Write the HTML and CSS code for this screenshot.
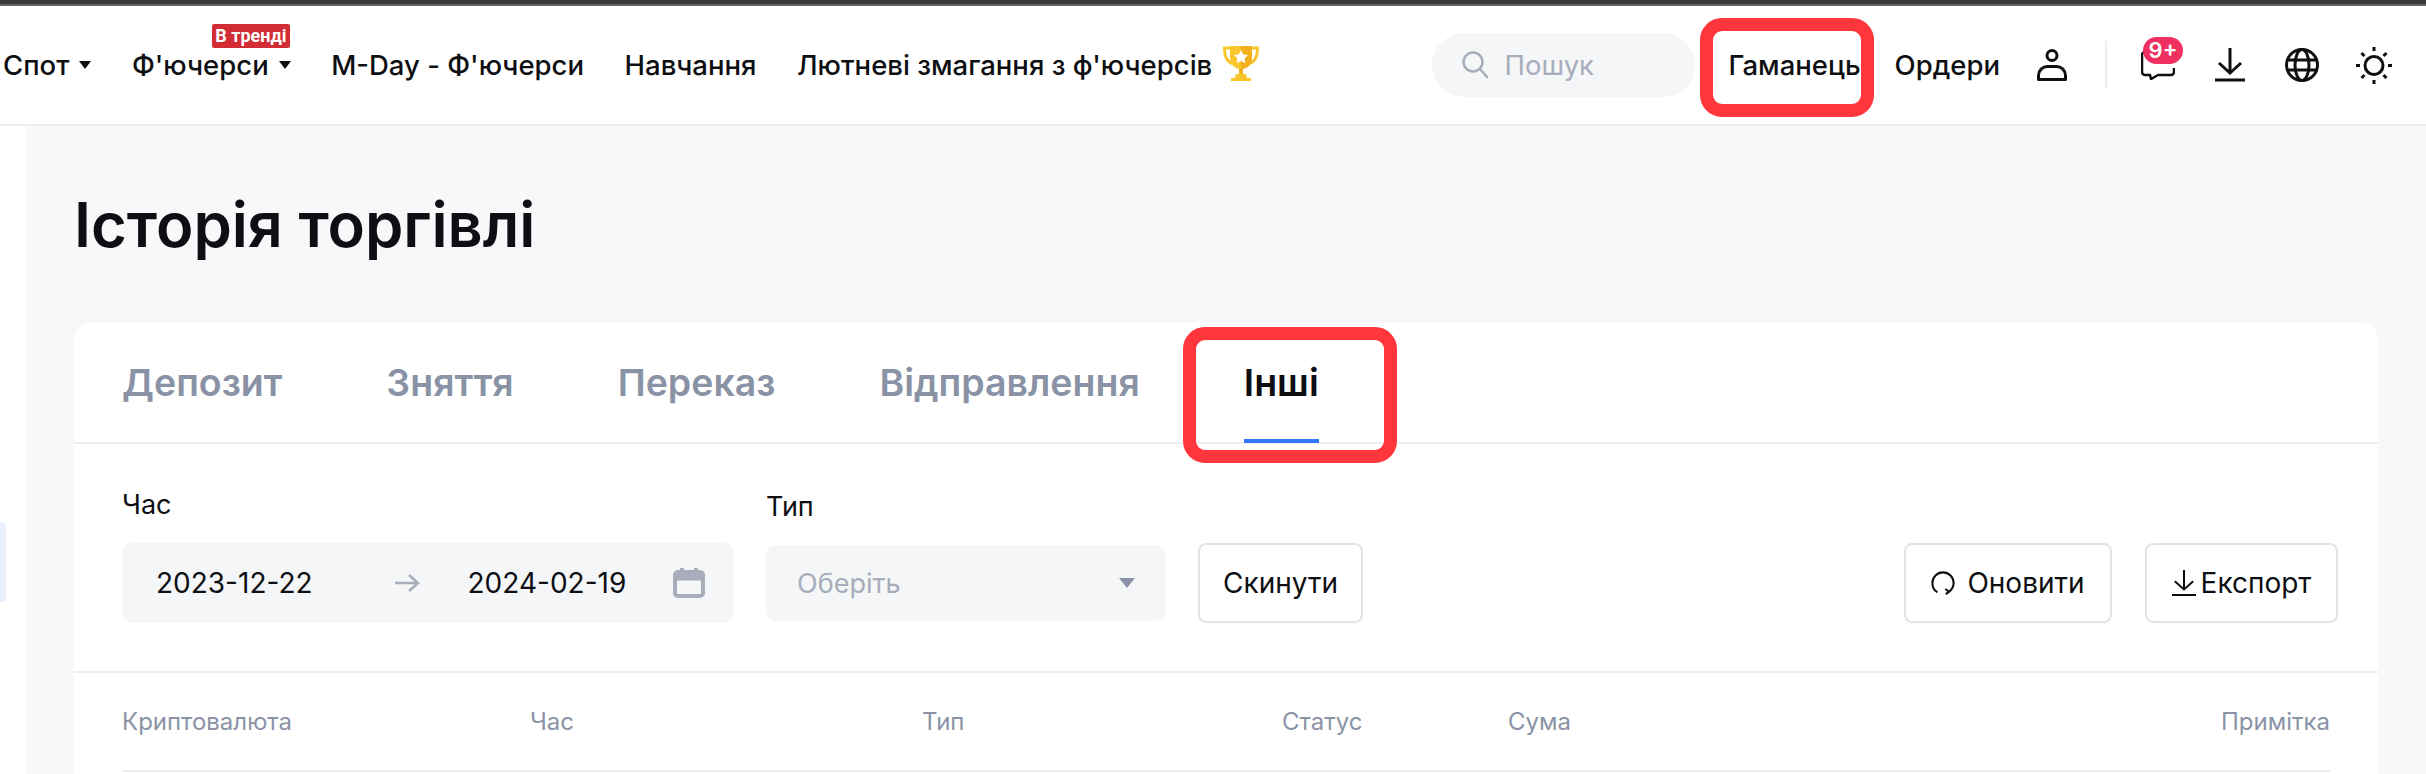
FILE: index.html
```html
<!DOCTYPE html>
<html lang="uk">
<head>
    <meta charset="UTF-8">
    <title>Історія торгівлі</title>
    <link rel="stylesheet" href="styles.css">
</head>
<body>
    <div class="topstrip"></div>

    <!-- Навігація -->
    <header class="navbar">
        <nav class="nav-left">
            <a class="nav-item">Спот <span class="caret"></span></a>
            <a class="nav-item nav-trending">
                <span class="trend-badge">В тренді</span>
                Ф'ючерси <span class="caret"></span>
            </a>
            <a class="nav-item">M-Day - Ф'ючерси</a>
            <a class="nav-item">Навчання</a>
            <a class="nav-item nav-contest">
                Лютневі змагання з ф'ючерсів
                <svg class="trophy" width="38" height="38" viewBox="0 0 38 38">
                    <path d="M9 3H2.500c0 10 3 15 10 16M29 3h6.500c0 10-3 15-10 16" fill="none" stroke="#f9c72e" stroke-width="3"/>
                    <path d="M8 1h22v11c0 8-5 12-11 12S8 20 8 12z" fill="#fbc62c"/>
                    <path d="M19 1h11v11c0 8-5 12-11 12z" fill="#f2b01e"/>
                    <path d="M17 23h4v7h-4z" fill="#f2b01e"/>
                    <path d="M14 29h10l1 4H13z" fill="#fbc62c"/>
                    <path d="M9 33h20v3H9z" fill="#fbc62c"/>
                    <path d="M19 5l2.300 4.500 4.700.6-3.500 3.300.9 4.800-4.400-2.300-4.400 2.300.9-4.800-3.500-3.300 4.700-.6z" fill="#fff"/>
                </svg>
            </a>
        </nav>
        <div class="nav-right">
            <div class="search">
                <svg width="28" height="30" viewBox="0 0 28 30" fill="none" stroke="#a7adba" stroke-width="2.500">
                    <circle cx="12" cy="12" r="9.500"/>
                    <path d="M19 19l7 8" stroke-linecap="round"/>
                </svg>
                <span>Пошук</span>
            </div>
            <a class="nav-item nav-wallet">Гаманець<span class="highlight highlight-wallet"></span></a>
            <a class="nav-item">Ордери</a>
            <svg class="nav-user" width="30" height="32" viewBox="0 0 30 32" fill="none" stroke="#0d0f12" stroke-width="3">
                <circle cx="15" cy="6.500" r="5"/>
                <path d="M1.500 30.500v-4a9 9 0 0 1 9-9h9a9 9 0 0 1 9 9v4z" stroke-linejoin="round"/>
            </svg>
            <span class="nav-divider"></span>
            <div class="nav-icons">
                <div class="chat">
                    <svg width="34" height="30" viewBox="0 0 34 30" fill="none" stroke="#0d0f12" stroke-width="2.500">
                        <path d="M5 2H4a3 3 0 0 0-3 3v17a3 3 0 0 0 3 3h5l1 4 7-4h13a3 3 0 0 0 3-3v-4" stroke-linejoin="round"/>
                    </svg>
                    <span class="chat-badge">9+</span>
                </div>
                <svg width="30" height="34" viewBox="0 0 30 34" fill="none" stroke="#0d0f12" stroke-width="3">
                    <path d="M15 0v25M4 15l11 10 11-10"/>
                    <path d="M0 32h30"/>
                </svg>
                <svg width="34" height="34" viewBox="0 0 34 34" fill="none" stroke="#0d0f12" stroke-width="3">
                    <circle cx="17" cy="17" r="15.500"/>
                    <ellipse cx="17" cy="17" rx="7" ry="15.500"/>
                    <path d="M2 12h30M2 22h30"/>
                </svg>
                <svg class="sun" width="36" height="37" viewBox="0 0 36 37" fill="none" stroke="#0d0f12" stroke-width="3">
                    <circle cx="18" cy="18.500" r="9"/>
                    <path d="M18 0v4M18 33v4M0 18.500h4M32 18.500h4M5.500 6l3 3M27.500 28l3 3M30.500 6l-3 3M8.500 28l-3 3"/>
                </svg>
            </div>
        </div>
    </header>

    <div class="page">
        <aside class="sidebar"><div class="side-active"></div></aside>

        <main class="content">
            <h1 class="page-title">Історія торгівлі</h1>

            <section class="card">
                <div class="tabs">
                    <a class="tab">Депозит</a>
                    <a class="tab">Зняття</a>
                    <a class="tab">Переказ</a>
                    <a class="tab">Відправлення</a>
                    <a class="tab active">Інші<span class="highlight highlight-tab"></span></a>
                </div>

                <!-- Фільтри -->
                <div class="filters">
                    <div class="field">
                        <label>Час</label>
                        <div class="date-range">
                            <span class="date">2023-12-22</span>
                            <svg class="date-arrow" width="26" height="20" viewBox="0 0 26 20" fill="none" stroke="#a7adba" stroke-width="2.500">
                                <path d="M1 10h23M15 2l9 8-9 8"/>
                            </svg>
                            <span class="date">2024-02-19</span>
                            <svg class="date-cal" width="32" height="30" viewBox="0 0 32 30" fill="none" stroke="#a7adba" stroke-width="4">
                                <rect x="2" y="4" width="28" height="24" rx="3"/>
                                <path d="M2 9h28" stroke-width="7"/>
                                <path d="M9 0v5M23 0v5"/>
                            </svg>
                        </div>
                    </div>
                    <div class="field">
                        <label>Тип</label>
                        <div class="select">
                            <span>Оберіть</span>
                            <span class="select-caret"></span>
                        </div>
                    </div>
                    <button class="btn btn-reset">Скинути</button>
                    <div class="actions">
                        <button class="btn btn-refresh">
                            <svg width="24" height="26" viewBox="0 0 26 26" fill="none" stroke="#0d0f12" stroke-width="2.200">
                                <path d="M7 23C3 21 1.500 17 1.500 13a11.500 11.500 0 0 1 23 0c0 4-1.500 7-5 9.500"/>
                                <path d="M15.500 19.500l4 3-3.500 2.500" />
                            </svg>
                            Оновити
                        </button>
                        <button class="btn btn-export">
                            <svg width="24" height="28" viewBox="0 0 26 28" fill="none" stroke="#0d0f12" stroke-width="2.200">
                                <path d="M13 0v21M3 12l10 9 10-9"/>
                                <path d="M0 27h26"/>
                            </svg>
                            Експорт
                        </button>
                    </div>
                </div>

                <div class="table-head">
                    <span>Криптовалюта</span>
                    <span>Час</span>
                    <span>Тип</span>
                    <span>Статус</span>
                    <span>Сума</span>
                    <span>Примітка</span>
                </div>
            </section>
        </main>
    </div>
</body>
</html>
```

FILE: styles.css
```css
* {
    box-sizing: border-box;
}
html, body {
    margin: 0;
    height: 774px;
    overflow: hidden;
}
body {
    background-color: #fff;
    color: #0d0f12;
    font-family: Inter, "Noto Sans", sans-serif;
}
.topstrip {
    height: 6px;
    background-color: #3a3a3a;
    border-bottom: 2px solid #666;
}

/* Navigation */
.navbar {
    display: flex;
    justify-content: space-between;
    align-items: center;
    height: 120px;
    padding: 0 34px 0 3px;
    background-color: #fff;
    border-bottom: 2px solid #eceef2;
}
.nav-left, .nav-right, .nav-icons {
    display: flex;
    align-items: center;
}
.nav-left {
    gap: 40.500px;
}
.nav-right {
    gap: 34px;
}
.nav-icons {
    gap: 40px;
}
.nav-item {
    position: relative;
    display: flex;
    align-items: center;
    gap: 10px;
    font-size: 27.500px;
    font-weight: 500;
    white-space: nowrap;
}
.caret {
    width: 0;
    height: 0;
    border-left: 6.500px solid transparent;
    border-right: 6.500px solid transparent;
    border-top: 8px solid #0d0f12;
}
.trend-badge {
    position: absolute;
    top: -24px;
    left: 80px;
    width: 78px;
    height: 24px;
    background-color: #d22c35;
    border-radius: 2px;
    color: #fff;
    font-family: Roboto, sans-serif;
    font-size: 18px;
    font-weight: 700;
    line-height: 24px;
    text-align: center;
}
.trophy {
    margin-top: -2px;
}
.nav-user {
    margin: 0 4px 0 3px;
}
.sun {
    margin-left: -3px;
}
.search {
    display: flex;
    align-items: center;
    gap: 16px;
    width: 263px;
    height: 64px;
    padding-left: 29px;
    background-color: #f5f6f8;
    border-radius: 32px;
    color: #a7adba;
    font-size: 27.500px;
}
.highlight {
    position: absolute;
    border: 13px solid #ff363c;
    border-radius: 22px;
}
.highlight-wallet {
    top: -30px;
    left: -29px;
    width: 174px;
    height: 99px;
}
.highlight-tab {
    top: 4px;
    left: -61px;
    width: 214px;
    height: 136px;
}
.nav-divider {
    width: 2px;
    height: 48px;
    background-color: #ebecf0;
}
.chat {
    position: relative;
    display: flex;
}
.chat-badge {
    position: absolute;
    top: -13px;
    left: 2px;
    width: 40px;
    height: 27px;
    background-color: #f03060;
    border-radius: 14px;
    color: #fff;
    font-size: 22px;
    font-weight: 600;
    line-height: 27px;
    text-align: center;
}

/* Page */
.page {
    display: flex;
    height: 648px;
}
.sidebar {
    flex: none;
    width: 26px;
    padding-top: 396px;
    background-color: #fff;
}
.side-active {
    width: 6px;
    height: 80px;
    background-color: #e8f0fe;
    border-radius: 0 4px 4px 0;
}
.content {
    flex: 1;
    padding: 0 48px 0 48px;
    background-color: #f7f8fa;
}
.page-title {
    margin: 0;
    padding: 65px 0 0;
    height: 197px;
    font-size: 61.500px;
    font-weight: 600;
    line-height: 68px;
}
.card {
    background-color: #fff;
    border-radius: 16px 16px 0 0;
    height: 451px;
}

/* Tabs */
.tabs {
    display: flex;
    gap: 104px;
    height: 121px;
    padding: 0 48px;
    border-bottom: 2px solid #eceef2;
}
.tab {
    position: relative;
    height: 120px;
    font-size: 37.500px;
    font-weight: 600;
    line-height: 120px;
    color: #8a93a6;
    white-space: nowrap;
}
.tab.active {
    color: #0d0f12;
    border-bottom: 4px solid #3377ff;
}

/* Filters */
.filters {
    display: flex;
    align-items: flex-end;
    height: 229px;
    padding: 0 40px 48px 48px;
    border-bottom: 2px solid #eceef2;
}
.field {
    display: flex;
    flex-direction: column;
    margin-right: 32px;
}
.field label {
    margin-bottom: 22px;
    font-size: 27px;
    line-height: 32px;
}
.date-range {
    display: flex;
    align-items: center;
    width: 612px;
    height: 80px;
    padding-left: 34px;
    background-color: #f5f6f8;
    border-radius: 10px;
    font-size: 28px;
}
.date-arrow {
    margin: 0 48px 0 81px;
}
.date-cal {
    margin-left: 47px;
}
.select {
    display: flex;
    align-items: center;
    justify-content: space-between;
    width: 400px;
    height: 76px;
    margin-bottom: 2px;
    padding: 0 31px;
    background-color: #f5f6f8;
    border-radius: 10px;
    color: #a7adba;
    font-size: 27px;
}
.select-caret {
    width: 0;
    height: 0;
    border-left: 8px solid transparent;
    border-right: 8px solid transparent;
    border-top: 10px solid #8a93a6;
}
.btn {
    display: flex;
    align-items: center;
    justify-content: center;
    height: 80px;
    padding: 0;
    background-color: #fff;
    border: 2px solid #e3e4e6;
    border-radius: 8px;
    color: #0d0f12;
    font-family: inherit;
    font-size: 28px;
}
.btn-reset {
    width: 165px;
}
.actions {
    display: flex;
    gap: 33px;
    margin-left: auto;
}
.btn-refresh {
    gap: 12px;
    width: 208px;
}
.btn-export {
    gap: 5px;
    width: 193px;
}

/* Table header */
.table-head {
    display: grid;
    grid-template-columns: 408px 392px 360px 226px 1fr auto;
    align-items: center;
    height: 99px;
    margin: 0 48px;
    border-bottom: 2px solid #eceef2;
    color: #8a93a6;
    font-size: 24px;
}
```
